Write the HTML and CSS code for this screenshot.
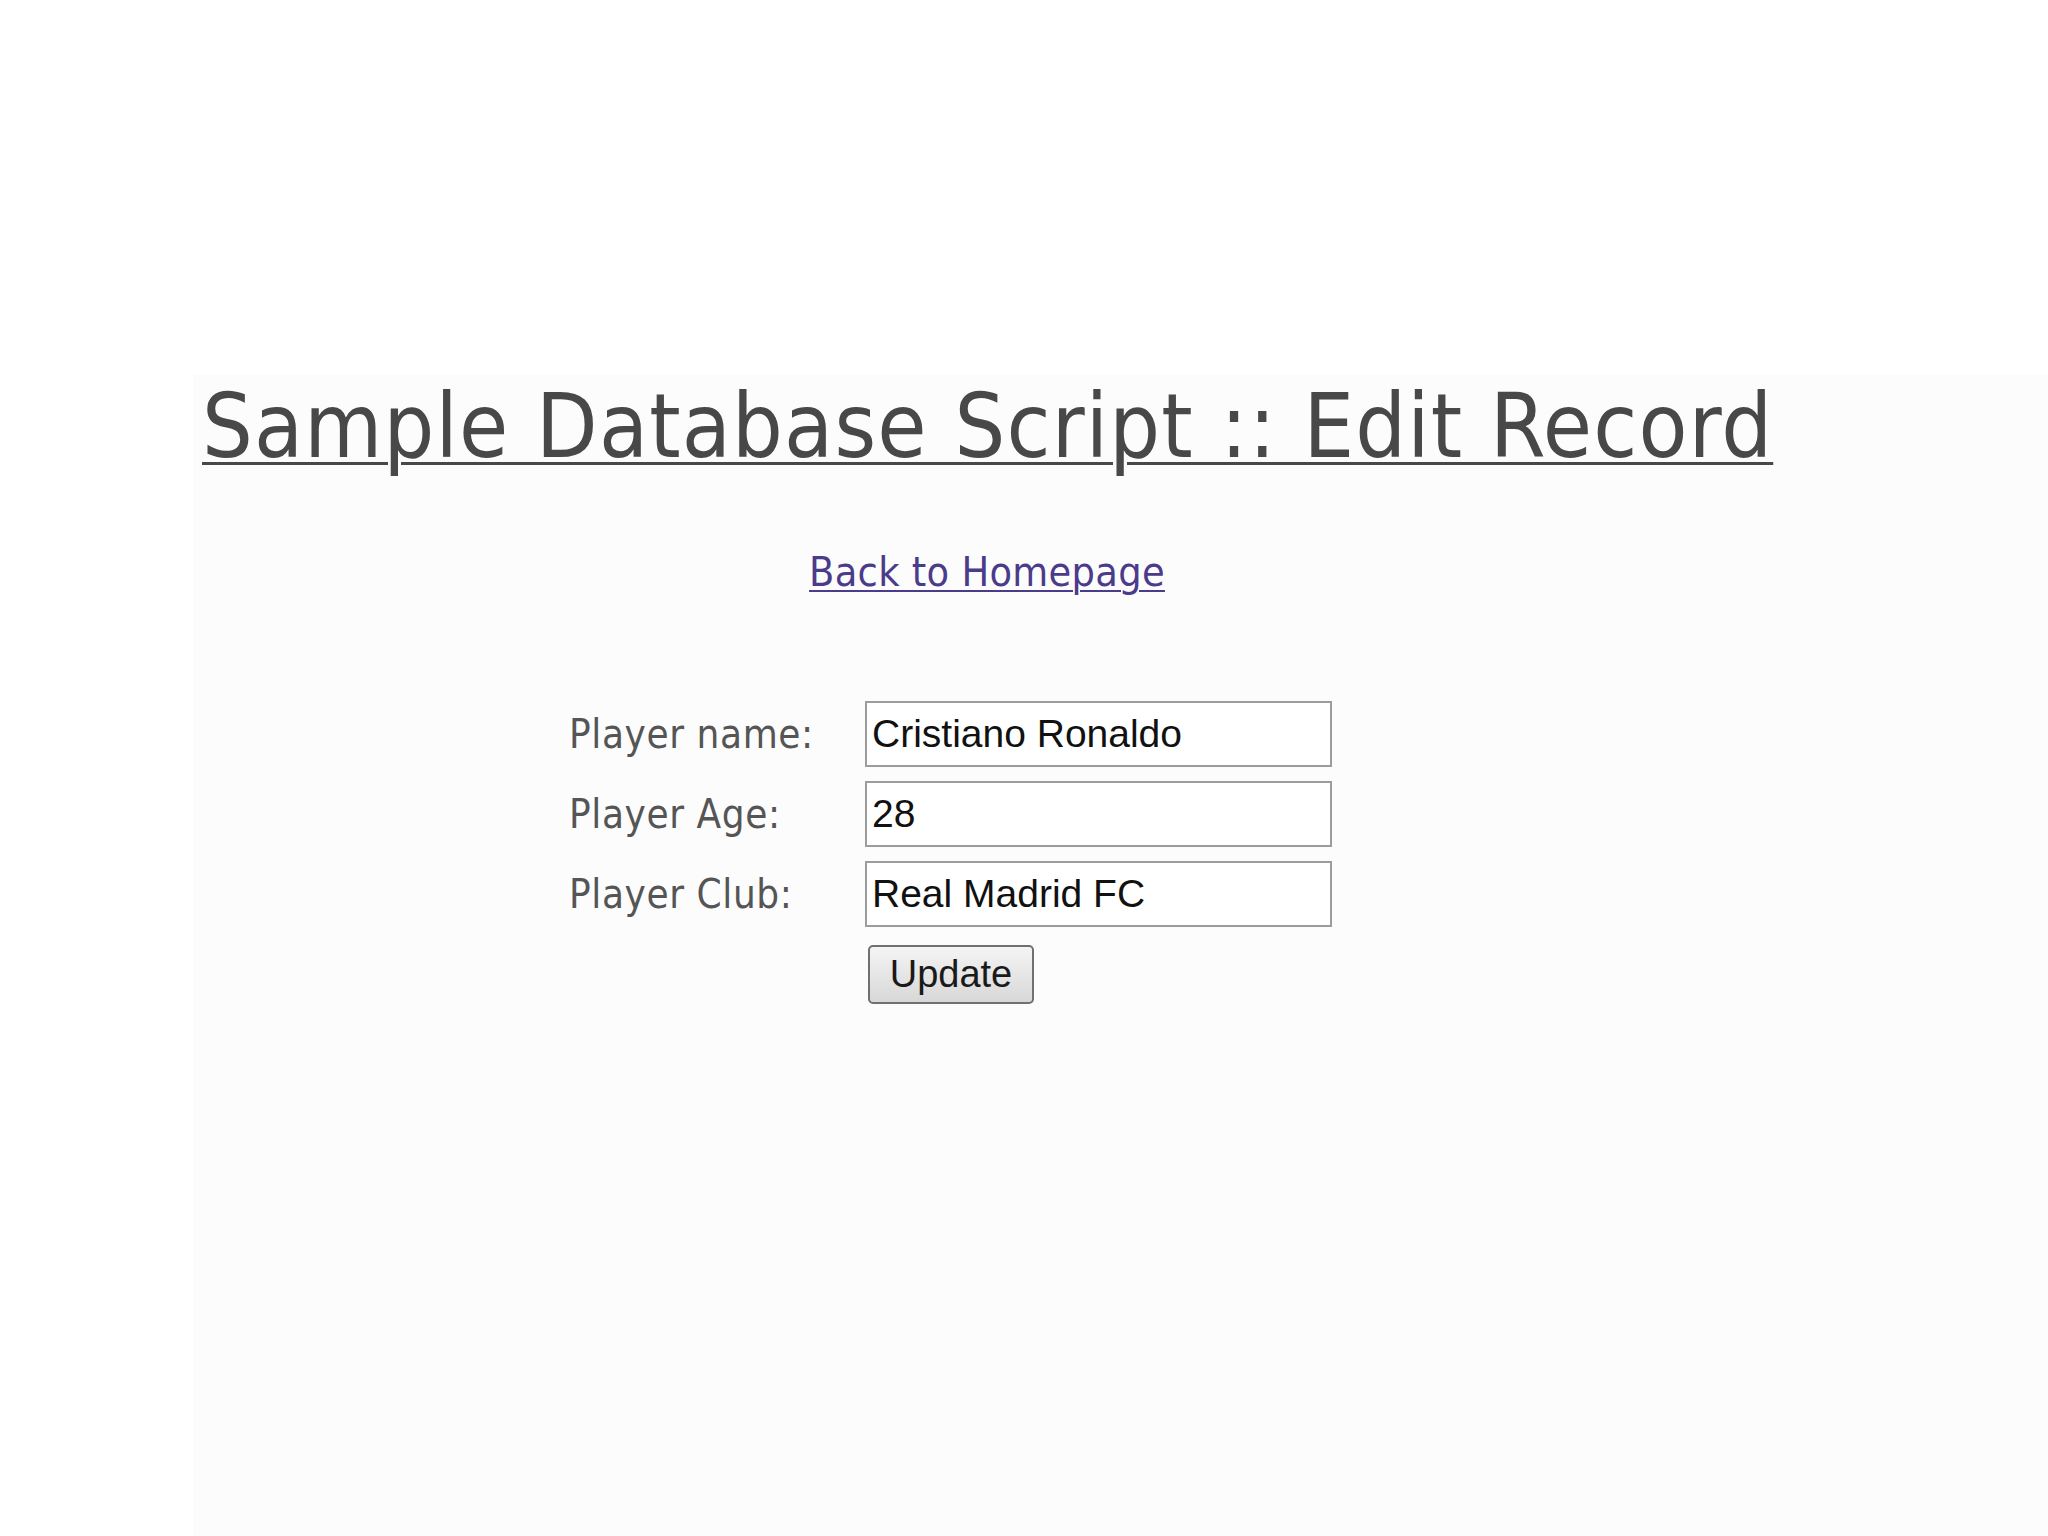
FILE: index.html
```html
<!DOCTYPE html>
<html lang="en">
<head>
<meta charset="utf-8">
<title>Sample Database Script :: Edit Record</title>
<link rel="stylesheet" href="styles.css">
</head>
<body>
<div class="page">
  <h1 class="title"><a href="#">Sample Database Script :: Edit Record</a></h1>
  <p class="back"><a href="#">Back to Homepage</a></p>
  <form class="edit-form" action="#">
    <label class="field-label" for="name">Player name:</label>
    <input class="field-input" id="name" type="text" value="Cristiano Ronaldo">
    <label class="field-label" for="age">Player Age:</label>
    <input class="field-input" id="age" type="text" value="28">
    <label class="field-label" for="club">Player Club:</label>
    <input class="field-input" id="club" type="text" value="Real Madrid FC">
    <span class="spacer"></span>
    <div class="actions"><button class="update-btn" type="submit">Update</button></div>
  </form>
</div>
</body>
</html>
```

FILE: styles.css
```css
html, body {
  margin: 0;
  padding: 0;
  background: #ffffff;
}

body {
  min-height: 1536px;
}

.page {
  margin: 375px 0 0 193px;
  padding: 7px 0 0 0;
  min-height: 1161px;
  background: #fdfcfd;
  font-family: "DejaVu Sans Condensed", "DejaVu Sans", sans-serif;
}

.title {
  margin: 0;
  padding-left: 9px;
  font-size: 89px;
  font-weight: normal;
  line-height: 88px;
  letter-spacing: 1.2px;
}

.title a {
  color: #484848;
  text-decoration: underline;
  text-decoration-thickness: 3px;
  text-underline-offset: 5px;
}

.back {
  width: 1588px;
  margin: 82px 0 0 0;
  text-align: center;
  font-size: 41px;
  line-height: 41px;
  letter-spacing: 0.3px;
}

.back a {
  color: #4b3b8b;
  text-decoration-thickness: 2px;
  text-underline-offset: 4px;
}

.edit-form {
  display: grid;
  grid-template-columns: 296px 467px;
  row-gap: 14px;
  align-items: center;
  margin: 108px 0 0 376px;
}

.field-label {
  font-size: 40px;
  color: #555555;
  line-height: 66px;
  letter-spacing: 0.6px;
}

.field-input {
  box-sizing: border-box;
  width: 467px;
  height: 66px;
  margin: 0;
  padding: 0 0 0 5px;
  border: 2px solid #9c9c9c;
  background: #ffffff;
  font-family: "Liberation Sans", Arial, sans-serif;
  font-size: 39px;
  color: #111111;
  outline: none;
}

.actions {
  padding: 4px 0 0 3px;
}

.update-btn {
  box-sizing: border-box;
  width: 166px;
  height: 59px;
  margin: 0;
  padding: 0;
  border: 2px solid #707070;
  border-radius: 5px;
  background: linear-gradient(#f4f4f4, #e6e6e6 50%, #d8d8d8);
  font-family: "Liberation Sans", Arial, sans-serif;
  font-size: 38px;
  color: #1a1a1a;
}
```
